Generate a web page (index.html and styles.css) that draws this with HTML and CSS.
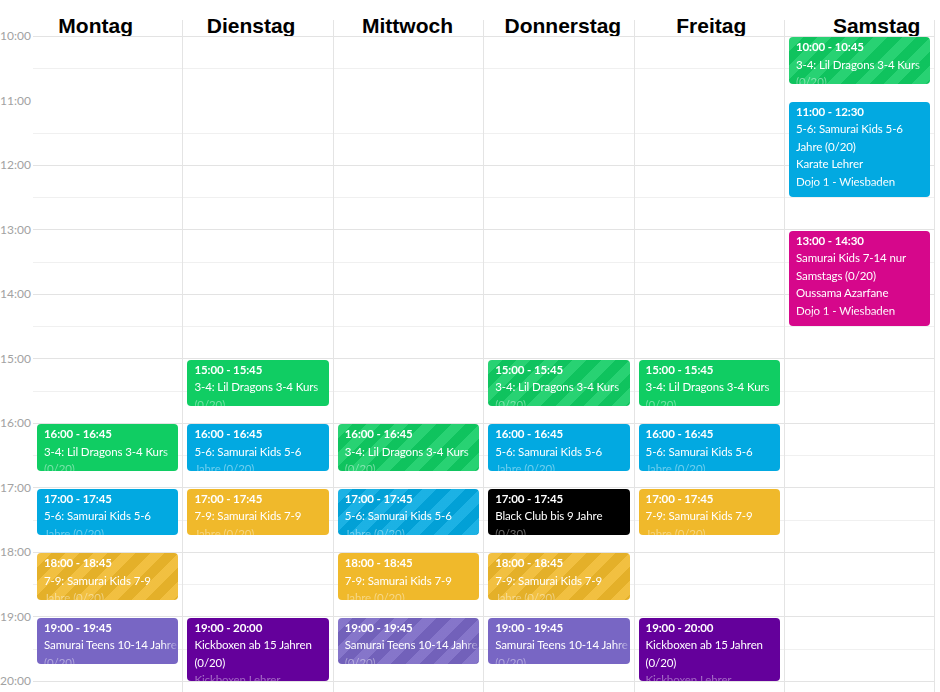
FILE: index.html
```html
<!DOCTYPE html>
<html lang="de">
<head>
<meta charset="utf-8">
<title>Stundenplan</title>
<link rel="stylesheet" href="styles.css">
</head>
<body>
<div class="cal">
  <div class="gutter">
    <div class="tl">10:00</div><div class="tl">11:00</div><div class="tl">12:00</div><div class="tl">13:00</div><div class="tl">14:00</div><div class="tl">15:00</div><div class="tl">16:00</div><div class="tl">17:00</div><div class="tl">18:00</div><div class="tl">19:00</div><div class="tl">20:00</div>
  </div>

  <div class="day">
    <div class="dname dn-mo">Montag</div>
    <div class="dbody">
      <div class="ev green" style="top:388px;height:46.9px"><div class="ev-in"><b>16:00 - 16:45</b><span>3-4: Lil Dragons 3-4 Kurs (0/20)</span></div></div>
      <div class="ev blue" style="top:452.5px;height:46.9px"><div class="ev-in"><b>17:00 - 17:45</b><span>5-6: Samurai Kids 5-6 Jahre (0/20)</span></div></div>
      <div class="ev yellow striped" style="top:517px;height:46.9px"><div class="ev-in"><b>18:00 - 18:45</b><span>7-9: Samurai Kids 7-9 Jahre (0/20)</span></div></div>
      <div class="ev lilac" style="top:581.5px;height:46.9px"><div class="ev-in"><b>19:00 - 19:45</b><span>Samurai Teens 10-14 Jahre (0/20)</span></div></div>
    </div>
  </div>

  <div class="day">
    <div class="dname dn-di">Dienstag</div>
    <div class="dbody">
      <div class="ev green" style="top:323.5px;height:46.9px"><div class="ev-in"><b>15:00 - 15:45</b><span>3-4: Lil Dragons 3-4 Kurs (0/20)</span></div></div>
      <div class="ev blue" style="top:388px;height:46.9px"><div class="ev-in"><b>16:00 - 16:45</b><span>5-6: Samurai Kids 5-6 Jahre (0/20)</span></div></div>
      <div class="ev yellow" style="top:452.5px;height:46.9px"><div class="ev-in"><b>17:00 - 17:45</b><span>7-9: Samurai Kids 7-9 Jahre (0/20)</span></div></div>
      <div class="ev violet" style="top:581.5px;height:63px"><div class="ev-in"><b>19:00 - 20:00</b><span>Kickboxen ab 15 Jahren (0/20)</span><span>Kickboxen Lehrer</span></div></div>
    </div>
  </div>

  <div class="day">
    <div class="dname dn-mi">Mittwoch</div>
    <div class="dbody">
      <div class="ev green striped" style="top:388px;height:46.9px"><div class="ev-in"><b>16:00 - 16:45</b><span>3-4: Lil Dragons 3-4 Kurs (0/20)</span></div></div>
      <div class="ev blue striped" style="top:452.5px;height:46.9px"><div class="ev-in"><b>17:00 - 17:45</b><span>5-6: Samurai Kids 5-6 Jahre (0/20)</span></div></div>
      <div class="ev yellow" style="top:517px;height:46.9px"><div class="ev-in"><b>18:00 - 18:45</b><span>7-9: Samurai Kids 7-9 Jahre (0/20)</span></div></div>
      <div class="ev lilac striped" style="top:581.5px;height:46.9px"><div class="ev-in"><b>19:00 - 19:45</b><span>Samurai Teens 10-14 Jahre (0/20)</span></div></div>
    </div>
  </div>

  <div class="day">
    <div class="dname dn-do">Donnerstag</div>
    <div class="dbody">
      <div class="ev green striped" style="top:323.5px;height:46.9px"><div class="ev-in"><b>15:00 - 15:45</b><span>3-4: Lil Dragons 3-4 Kurs (0/20)</span></div></div>
      <div class="ev blue" style="top:388px;height:46.9px"><div class="ev-in"><b>16:00 - 16:45</b><span>5-6: Samurai Kids 5-6 Jahre (0/20)</span></div></div>
      <div class="ev black" style="top:452.5px;height:46.9px"><div class="ev-in"><b>17:00 - 17:45</b><span>Black Club bis 9 Jahre (0/30)</span></div></div>
      <div class="ev yellow striped" style="top:517px;height:46.9px"><div class="ev-in"><b>18:00 - 18:45</b><span>7-9: Samurai Kids 7-9 Jahre (0/20)</span></div></div>
      <div class="ev lilac" style="top:581.5px;height:46.9px"><div class="ev-in"><b>19:00 - 19:45</b><span>Samurai Teens 10-14 Jahre (0/20)</span></div></div>
    </div>
  </div>

  <div class="day">
    <div class="dname dn-fr">Freitag</div>
    <div class="dbody">
      <div class="ev green" style="top:323.5px;height:46.9px"><div class="ev-in"><b>15:00 - 15:45</b><span>3-4: Lil Dragons 3-4 Kurs (0/20)</span></div></div>
      <div class="ev blue" style="top:388px;height:46.9px"><div class="ev-in"><b>16:00 - 16:45</b><span>5-6: Samurai Kids 5-6 Jahre (0/20)</span></div></div>
      <div class="ev yellow" style="top:452.5px;height:46.9px"><div class="ev-in"><b>17:00 - 17:45</b><span>7-9: Samurai Kids 7-9 Jahre (0/20)</span></div></div>
      <div class="ev violet" style="top:581.5px;height:63px"><div class="ev-in"><b>19:00 - 20:00</b><span>Kickboxen ab 15 Jahren (0/20)</span><span>Kickboxen Lehrer</span></div></div>
    </div>
  </div>

  <div class="day">
    <div class="dname dn-sa">Samstag</div>
    <div class="dbody">
      <div class="ev green striped" style="top:1px;height:46.9px"><div class="ev-in"><b>10:00 - 10:45</b><span>3-4: Lil Dragons 3-4 Kurs (0/20)</span></div></div>
      <div class="ev blue" style="top:65.5px;height:95.2px"><div class="ev-in"><b>11:00 - 12:30</b><span>5-6: Samurai Kids 5-6 Jahre (0/20)</span><span>Karate Lehrer</span><span>Dojo 1 - Wiesbaden</span></div></div>
      <div class="ev magenta" style="top:194.5px;height:95.2px"><div class="ev-in"><b>13:00 - 14:30</b><span>Samurai Kids 7-14 nur Samstags (0/20)</span><span>Oussama Azarfane</span><span>Dojo 1 - Wiesbaden</span></div></div>
    </div>
  </div>
</div>
</body>
</html>
```
FILE: styles.css
```css
html, body {
  margin: 0;
  padding: 0;
  background: #fff;
  overflow: hidden;
}

.cal {
  display: grid;
  grid-template-columns: 33px repeat(6, 150.4px);
  margin-top: 20px;
  width: 940px;
  height: 672px;
}

.gutter {
  padding-top: 9px;
  font-family: "Lato", "Open Sans", sans-serif;
  font-size: 12px;
  color: #a2a2a2;
}

.tl {
  height: 64.5px;
  line-height: 14px;
  text-align: right;
  padding-right: 4px;
}

.day {
  border-right: 1px solid #e4e4e4;
  display: flex;
  flex-direction: column;
  min-width: 0;
}

.dname {
  height: 16px;
  line-height: 12px;
  font-family: "Liberation Sans", Arial, sans-serif;
  font-weight: bold;
  font-size: 21px;
  color: #000;
  text-align: center;
  white-space: nowrap;
  background: #fff;
}

.dn-mo { padding-right: 24px; }
.dn-di { padding-right: 14px; }
.dn-mi { padding-right: 2px; }
.dn-do { padding-left: 8px; }
.dn-fr { padding-left: 4px; }
.dn-sa { padding-left: 34px; }

.dbody {
  position: relative;
  flex: 1;
  background-image: repeating-linear-gradient(
    to bottom,
    #e3e3e3 0, #e3e3e3 1px,
    transparent 1px, transparent 32.25px,
    #f0f0f0 32.25px, #f0f0f0 33.25px,
    transparent 33.25px, transparent 64.5px
  );
}

.ev {
  position: absolute;
  left: 4px;
  right: 4px;
  border-radius: 4px;
  overflow: hidden;
  color: #fff;
  background-color: var(--c);
  font-family: "Lato", "Open Sans", sans-serif;
  font-size: 11.5px;
  line-height: 17.5px;
  letter-spacing: -0.1px;
}

.ev-in {
  height: 100%;
  padding: 1px 1px 0 7px;
  box-sizing: border-box;
  -webkit-mask-image:
    linear-gradient(to bottom, #000 calc(100% - 14px), rgba(0,0,0,0.5) calc(100% - 8px), rgba(0,0,0,0.35)),
    linear-gradient(to right, #000 calc(100% - 16px), rgba(0,0,0,0.25) calc(100% - 2px));
  -webkit-mask-composite: source-in;
  mask-image:
    linear-gradient(to bottom, #000 calc(100% - 14px), rgba(0,0,0,0.5) calc(100% - 8px), rgba(0,0,0,0.35)),
    linear-gradient(to right, #000 calc(100% - 16px), rgba(0,0,0,0.25) calc(100% - 2px));
  mask-composite: intersect;
}

.ev-in b,
.ev-in span {
  display: block;
}

.ev-in b {
  font-weight: 700;
}

.striped {
  background-image: repeating-linear-gradient(
    135deg,
    rgba(255,255,255,0.10) 0, rgba(255,255,255,0.10) 10px,
    rgba(0,0,0,0.05) 10px, rgba(0,0,0,0.05) 20px
  );
}

.green { --c: #10cd63; }
.blue { --c: #02a9e1; }
.yellow { --c: #f0b92b; }
.lilac { --c: #7866c4; }
.violet { --c: #64009b; }
.black { --c: #000; }
.magenta { --c: #d6078b; }
```
